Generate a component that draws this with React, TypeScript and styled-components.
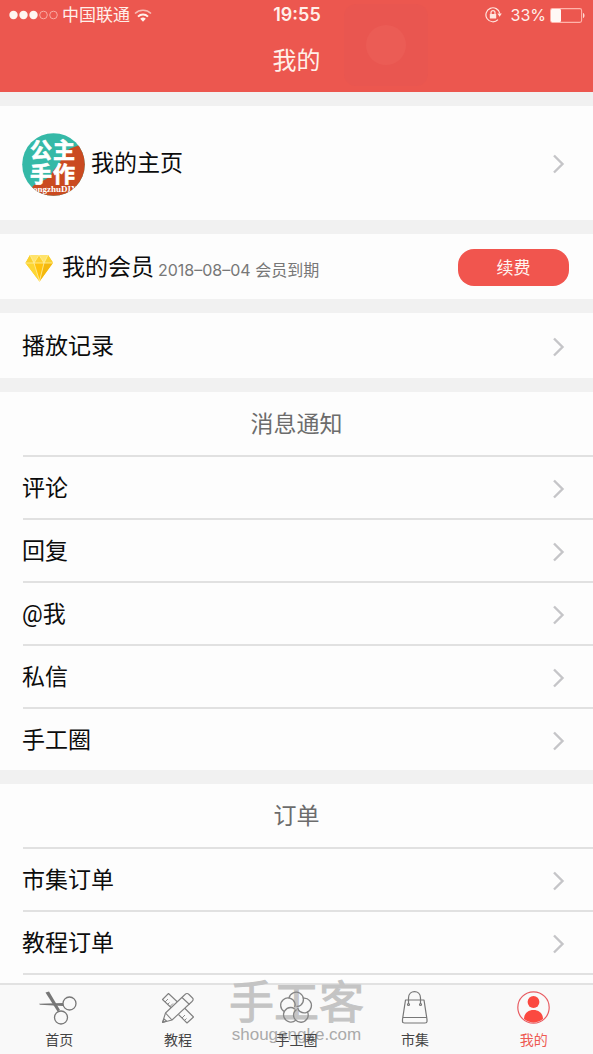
import React from 'react';
import styled, { createGlobalStyle } from 'styled-components';

const GlobalStyle = createGlobalStyle`
  *, *::before, *::after { box-sizing: border-box; }
  body {
    margin: 0;
    background: #f1f1f1;
    color: #0c0c0c;
    font-family: Inter, "Noto Sans CJK SC", sans-serif;
  }
  a { color: inherit; text-decoration: none; }
  h1, h2, p { margin: 0; font-weight: 400; }
`;

const Page = styled.div`
  display: flex;
  flex-direction: column;
  min-height: 100vh;
`;

const Header = styled.header`
  position: relative;
  height: 92px;
  background: #ec574f;
  color: #fff0ea;
`;

const StatusBar = styled.div`
  position: relative;
  display: grid;
  grid-template-columns: 1fr auto 1fr;
  align-items: center;
  height: 30px;
  padding: 0 8px 0 9px;
`;

const StatusGroup = styled.div<{ $end?: boolean }>`
  display: flex;
  align-items: center;
  justify-content: ${(p) => (p.$end ? 'flex-end' : 'flex-start')};
  gap: 4px;
  font-size: ${(p) => (p.$end ? 16 : 17)}px;
  line-height: 30px;
  svg { flex: none; }
`;

const RotationLock = styled.svg`
  margin-right: 5px;
`;

const Clock = styled.time`
  font-size: 18px;
  font-weight: 600;
  line-height: 30px;
`;

const Title = styled.h1`
  font-size: 24px;
  line-height: 36px;
  padding-top: 13px;
  text-align: center;
`;

const TouchButton = styled.div`
  position: absolute;
  top: 4px;
  left: 58%;
  display: grid;
  place-items: center;
  width: 84px;
  height: 82px;
  border-radius: 12px;
  background: #e95650;
  &::after {
    content: '';
    width: 40px;
    height: 40px;
    border-radius: 50%;
    background: #eb5c55;
  }
`;

const Content = styled.main`
  flex: 1;
  display: flex;
  flex-direction: column;
  gap: 14px;
  padding-top: 14px;
`;

const Card = styled.section<{ $grow?: boolean }>`
  flex: ${(p) => (p.$grow ? '1 0 auto' : 'none')};
  background: #fdfdfd;
`;

const rowLayout = `
  display: flex;
  align-items: center;
  padding: 2px 28px 0 22px;
  font-family: Roboto, "Noto Sans CJK SC", sans-serif;
  font-size: 23px;
  line-height: 34px;
`;

const RowLink = styled.a<{ $height: number }>`
  ${rowLayout}
  height: ${(p) => p.$height}px;
  gap: 6px;
  svg:last-child { margin-left: auto; }
`;

const MemberRow = styled.div`
  ${rowLayout}
  height: 65px;
  padding-right: 24px;
`;

const MemberName = styled.span`
  margin: 0 4px 0 7px;
`;

const Expiry = styled.span`
  padding-top: 4px;
  color: #777;
  font-family: Inter, "Noto Sans CJK SC", sans-serif;
  font-size: 16px;
  line-height: 24px;
`;

const RenewButton = styled.button`
  width: 111px;
  height: 37px;
  margin-left: auto;
  border: 0;
  border-radius: 16px;
  background: #f1554e;
  color: #fff4f0;
  font: inherit;
  font-size: 17px;
  line-height: 24px;
`;

const GroupTitle = styled.h2`
  height: 63px;
  color: #6c6c6c;
  font-size: 23px;
  line-height: 65px;
  text-align: center;
`;

const List = styled.ul<{ $closed?: boolean }>`
  margin: 0;
  padding: 0;
  list-style: none;
  li::before {
    content: '';
    display: block;
    height: 2px;
    margin-left: 23px;
    background: #e1e1e1;
  }
  &::after {
    content: '';
    display: ${(p) => (p.$closed ? 'block' : 'none')};
    height: 2px;
    margin-left: 23px;
    background: #e1e1e1;
  }
`;

const TabBar = styled.nav`
  position: sticky;
  bottom: 0;
  display: grid;
  grid-template-columns: repeat(5, 1fr);
  height: 71px;
  border-top: 2px solid #e2e2e2;
  background: #f9f9f9;
`;

const Tab = styled.a<{ $active?: boolean }>`
  position: relative;
  display: flex;
  flex-direction: column;
  align-items: center;
  padding-top: 4px;
  color: ${(p) => (p.$active ? '#ee5a52' : '#444')};
  font-size: 14px;
  line-height: 20px;
  svg { margin-bottom: 5px; }
`;

const Watermark = styled.div`
  position: absolute;
  inset: -5px 0 auto;
  color: #bfbfbf;
  text-align: center;
  pointer-events: none;
`;

const WatermarkName = styled.p`
  font-size: 45px;
  line-height: 45px;
  -webkit-text-stroke: 1px #c4c4c4;
  color: #c4c4c4;
`;

const WatermarkSite = styled.p`
  color: #aaa;
  font-family: "Liberation Sans", sans-serif;
  font-size: 17px;
  line-height: 20px;
`;

const Chevron = () => (
  <svg width="13" height="20" viewBox="0 0 13 20" fill="none" stroke="#c5c5c8" strokeWidth="2.4" aria-hidden="true">
    <path d="M2 1.5 10.5 10 2 18.5" />
  </svg>
);

const Signal = () => (
  <svg width="49" height="10" viewBox="0 0 49 10" role="img" aria-label="信号">
    <g fill="#fff5f0">
      <circle cx="4.5" cy="5" r="4.2" /><circle cx="14.5" cy="5" r="4.2" /><circle cx="24.5" cy="5" r="4.2" />
    </g>
    <g fill="none" stroke="#f9aaa2" strokeWidth="1">
      <circle cx="34.5" cy="5" r="3.8" /><circle cx="44.5" cy="5" r="3.8" />
    </g>
  </svg>
);

const Wifi = () => (
  <svg width="18" height="13" viewBox="0 0 18 13" fill="none" stroke="#fff1eb" role="img" aria-label="Wi-Fi">
    <path d="M1 4.5a11.5 11.5 0 0 1 16 0" strokeWidth="1.6" opacity=".65" />
    <path d="M4 7.6a7.2 7.2 0 0 1 10 0" strokeWidth="2" />
    <path d="M6.2 9.8a4 4 0 0 1 5.6 0L9 12.8z" fill="#fff1eb" stroke="none" />
  </svg>
);

const Lock = () => (
  <RotationLock width="17" height="16" viewBox="0 0 17 16" fill="none" stroke="#ffe5df" strokeWidth="1.2" role="img" aria-label="方向锁定">
    <path d="M14.800 6.500A7 7 0 1 0 13 12.600" />
    <path d="M12.400 6.600h4.400l-2.200 3.200z" fill="#ffe5df" stroke="none" />
    <path d="M6 7V5.600a2 2 0 0 1 4 0V7" />
    <rect x="4.800" y="7" width="6.400" height="4.600" rx=".6" fill="#ffe5df" stroke="none" />
  </RotationLock>
);

const Battery = () => (
  <svg width="35" height="15" viewBox="0 0 35 15" role="img" aria-label="电量">
    <rect x=".6" y=".6" width="31" height="13.8" rx="1.8" fill="none" stroke="#ffb4ab" strokeWidth="1.1" />
    <rect x="1" y="1" width="10" height="13" rx="1.2" fill="#fff9f6" />
    <path d="M33 5c2 .6 2 4.400 0 5z" fill="#ffd9d2" />
  </svg>
);

const Avatar = () => (
  <svg width="63" height="63" viewBox="0 0 63 63" role="img" aria-label="公主手作">
    <defs><clipPath id="avatar-disc"><circle cx="31.500" cy="31.500" r="31.300" /></clipPath></defs>
    <g clipPath="url(#avatar-disc)">
      <rect width="63" height="63" fill="#35b9a7" />
      <path d="M63 9 55 13C45 16 40 20 39 27 37 34 31 35 29 42 24 48 17 48 11 53L4 63H63z" fill="#ca4a20" />
      <g fill="#fff" stroke="#fff" strokeWidth=".7" fontFamily="Noto Sans CJK SC, sans-serif" fontSize="22" fontWeight="700">
        <text x="8" y="25">公</text><text x="31" y="25">主</text>
        <text x="8" y="49">手</text><text x="31" y="49">作</text>
      </g>
      <text x="31" y="59" fill="#fff" fontFamily="Liberation Serif, serif" fontSize="9" fontWeight="700" textAnchor="middle">gongzhuDIY</text>
    </g>
  </svg>
);

const Diamond = () => (
  <svg width="33" height="28" viewBox="0 0 33 28" aria-hidden="true">
    <path d="M8 1h18l5 7.500L17.500 27.500 3.500 9z" fill="#fbc918" />
    <path d="M3.500 9 8 1l4 8zM31 9l-5-8-4 8z" fill="#f9d130" />
    <path d="M8 1h9l-5 8zM26 1h-9l5 8z" fill="#ffe36b" />
    <path d="M12 9h10l-5-8z" fill="#fdd02e" />
    <path d="M3.500 9H12l5.500 18.500z" fill="#fdd633" />
    <path d="M12 9h10l-4.500 18.500z" fill="#ffc20d" />
    <path d="M22 9h9L17.500 27.500z" fill="#f4b80d" />
    <path d="M3.500 9H31M8 1l4 8 5-8 5 8 4-8M12 9l5.500 18L22 9" fill="none" stroke="#fff0a5" strokeWidth=".8" />
  </svg>
);

const iconProps = { width: 40, height: 36, viewBox: '0 0 40 36', fill: 'none', 'aria-hidden': true } as const;

const Scissors = () => (
  <svg {...iconProps} stroke="#777" strokeWidth="1.3">
    <circle cx="30.500" cy="14.500" r="6.500" />
    <circle cx="22" cy="28.500" r="6.500" />
    <path d="M0 14.700 24 14v3L1 15.800z" fill="#777" stroke="none" />
    <path d="M6.500 3.500 10 2.500 21 21l-2.500 1.500z" fill="#777" stroke="none" />
  </svg>
);

const RulerPencil = () => (
  <svg {...iconProps} stroke="#808080" strokeWidth="1.1" strokeLinejoin="round">
    <path d="M13.500 19 4.500 10.500l6-6 9 8.500M26.500 19l9 9-6.500 6-8.500-8.500" />
    <path d="m7 13 3-3M9.500 15.500l2-2M12 17.500l3-3M24 29l3-3M26.500 31.500l2-2" strokeWidth=".9" />
    <path d="m4.500 33.500 3-9.500L27 5.500q2-2 4 0l3.500 3.500q1.500 1.500-.5 3.500L14 31z" fill="#f9f9f9" />
    <path d="m7.500 24 6.500 7M24 8.500l7.500 7M4.500 33.500l4-1.500-2.500-2z" />
  </svg>
);

const petal = 'M13 9A7.300 7.300 0 1 1 24.700 16.200q-1.700 1.400-3.700 1.200';

const Flower = () => (
  <svg {...iconProps} stroke="#858585" strokeWidth="1.300" strokeLinecap="round">
    {[0, 72, 144, 216, 288].map((angle) => (
      <path key={angle} d={petal} transform={`rotate(${angle} 20 19)`} />
    ))}
  </svg>
);

const Bag = () => (
  <svg {...iconProps} stroke="#777" strokeWidth="1.200" strokeLinejoin="round">
    <path d="M10.500 11h18.500l3 19.500v2q0 1.500-2 1.500H9.500q-2 0-2-1.500v-2zM7.500 28.500h24.500" />
    <path d="M13.500 15V9C13.500.5 25.500.5 25.500 9v6" />
    <circle cx="13.500" cy="15.500" r="1" /><circle cx="25.500" cy="15.500" r="1" />
  </svg>
);

const Profile = () => (
  <svg {...iconProps}>
    <circle cx="19.500" cy="18.500" r="15.700" stroke="#e85d63" strokeWidth="1.200" />
    <circle cx="19.500" cy="13" r="5.900" fill="#fb4940" />
    <path d="M10 30C10 18 29 18 29 30 23.500 34.500 15.500 34.500 10 30z" fill="#fb4940" />
  </svg>
);

const messages = ['评论', '回复', '@我', '私信', '手工圈'];
const orders = ['市集订单', '教程订单'];
const tabs = [
  { label: '首页', Icon: Scissors },
  { label: '教程', Icon: RulerPencil },
  { label: '手工圈', Icon: Flower },
  { label: '市集', Icon: Bag },
  { label: '我的', Icon: Profile, active: true },
];

const LinkList = ({ items, closed }: { items: string[]; closed?: boolean }) => (
  <List $closed={closed}>
    {items.map((item) => (
      <li key={item}>
        <RowLink href="#" $height={61}>{item}<Chevron /></RowLink>
      </li>
    ))}
  </List>
);

export default function App() {
  return (
    <Page>
      <GlobalStyle />
      <Header>
        <TouchButton />
        <StatusBar>
          <StatusGroup><Signal />中国联通<Wifi /></StatusGroup>
          <Clock>19:55</Clock>
          <StatusGroup $end><Lock />33%<Battery /></StatusGroup>
        </StatusBar>
        <Title>我的</Title>
      </Header>
      <Content>
        <Card>
          <RowLink href="#" $height={114}><Avatar />我的主页<Chevron /></RowLink>
        </Card>
        <Card>
          <MemberRow>
            <Diamond />
            <MemberName>我的会员</MemberName>
            <Expiry>2018–08–04 会员到期</Expiry>
            <RenewButton type="button">续费</RenewButton>
          </MemberRow>
        </Card>
        <Card>
          <RowLink href="#" $height={65}>播放记录<Chevron /></RowLink>
        </Card>
        <Card>
          <GroupTitle>消息通知</GroupTitle>
          <LinkList items={messages} />
        </Card>
        <Card $grow>
          <GroupTitle>订单</GroupTitle>
          <LinkList items={orders} closed />
        </Card>
      </Content>
      <TabBar>
        <Watermark>
          <WatermarkName>手工客</WatermarkName>
          <WatermarkSite>shougengke.com</WatermarkSite>
        </Watermark>
        {tabs.map(({ label, Icon, active }) => (
          <Tab key={label} href="#" $active={active} aria-current={active ? 'page' : undefined}>
            <Icon />{label}
          </Tab>
        ))}
      </TabBar>
    </Page>
  );
}
